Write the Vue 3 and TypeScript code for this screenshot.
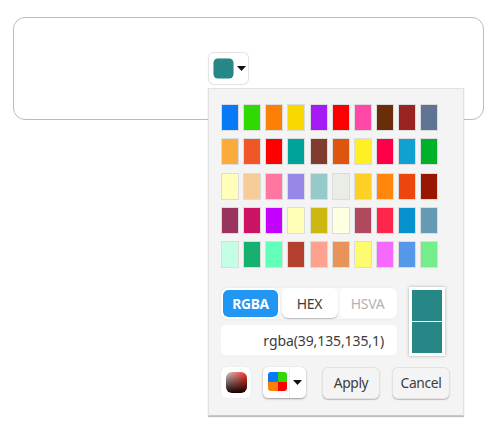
<script setup lang="ts">
import { ref } from 'vue'

const palette: string[][] = [
  ['#0879f7', '#30d903', '#fc8007', '#f8d800', '#a51af5', '#fc0000', '#ff48a8', '#692e09', '#9a2323', '#5f7593'],
  ['#fbab3c', '#f05727', '#ff0000', '#00a39a', '#803c2e', '#dd550f', '#fff026', '#ff0048', '#12a0d0', '#00b22a'],
  ['#ffffba', '#f6cd98', '#ff76a0', '#9885e8', '#96caca', '#eaede5', '#ffd024', '#ff870c', '#ed450e', '#991700'],
  ['#99345f', '#cc1263', '#c400ff', '#ffffb8', '#cdb812', '#ffffe2', '#b1495e', '#ff264b', '#0792cd', '#649bb3'],
  ['#c4ffe5', '#17b16f', '#62ffba', '#b3412e', '#ffa18f', '#e8935a', '#fffb6e', '#f768ff', '#5598e9', '#73ee88'],
]
const modes = ['RGBA', 'HEX', 'HSVA']
const mode = ref('RGBA')
const value = 'rgba(39,135,135,1)'
</script>

<template>
  <main class="page">
    <section class="field">
      <button class="trigger">
        <span class="trigger-color"></span>
        <svg class="caret" viewBox="0 0 9 5"><path d="M0 0h9L4.5 5z" /></svg>
      </button>
      <div class="popup">
        <div class="palette">
          <div v-for="(row, r) in palette" :key="r" class="palette-row">
            <span v-for="(c, i) in row" :key="i" class="tile" :style="{ backgroundColor: c }"></span>
          </div>
        </div>
        <div class="value-area">
          <div class="inputs">
            <div class="modes">
              <button
                v-for="m in modes"
                :key="m"
                class="mode"
                :class="{ active: m === mode, disabled: m === 'HSVA' }"
                @click="mode = m"
              >{{ m }}</button>
            </div>
            <div class="value">{{ value }}</div>
          </div>
          <div class="preview"><span></span><span></span></div>
        </div>
        <div class="actions">
          <button class="gradient-btn"><span class="gradient"></span></button>
          <button class="split">
            <span class="split-main"><span class="quad"><i></i><i></i><i></i><i></i></span></span>
            <span class="split-arrow"><svg class="caret" viewBox="0 0 9 5"><path d="M0 0h9L4.5 5z" /></svg></span>
          </button>
          <button class="action apply">Apply</button>
          <button class="action">Cancel</button>
        </div>
      </div>
    </section>
  </main>
</template>

<style>
body {
  background: #fff;
}
</style>

<style scoped>
* {
  box-sizing: border-box;
}
.page {
  height: 445px;
  padding: 17px 16px 0 13px;
  overflow: hidden;
  font-family: "Noto Sans", "Open Sans", sans-serif;
  font-size: 14px;
  color: #3c3c3c;
}
button {
  margin: 0;
  padding: 0;
  border: 0;
  font: inherit;
  color: inherit;
  background: #fff;
}
.field {
  position: relative;
  height: 103px;
  padding: 35px 0 0 195px;
  border: 1px solid #bcbcbc;
  border-radius: 12px;
}
.trigger {
  display: flex;
  align-items: center;
  gap: 4px;
  width: 39px;
  height: 31px;
  padding: 0 0 1px 5px;
  border-radius: 5px;
  box-shadow: 0 0 1px 1px #e2e2e2;
}
.trigger-color {
  width: 19px;
  height: 19px;
  border-radius: 4px;
  background: #278787;
  box-shadow: 0 0 0 0.5px #1f7b7b;
}
.caret {
  display: block;
  width: 9px;
  height: 5px;
  fill: #111;
}
.popup {
  position: absolute;
  left: 194px;
  top: 70px;
  width: 256px;
  height: 328px;
  padding: 15px 0 0 12px;
  background: #f4f4f4;
  border: 1px solid #e1e1e1;
  border-bottom: 1px solid #c8c8c8;
  box-shadow: 0 1px 1px #bdbdbd;
}
.palette {
  display: flex;
  flex-direction: column;
  gap: 7.25px;
}
.palette-row {
  display: flex;
  gap: 4.15px;
}
.tile {
  width: 18px;
  height: 27px;
  border: 1px solid #dcdcdc;
  background-clip: padding-box;
}
.value-area {
  display: flex;
  gap: 12px;
  margin-top: 19px;
}
.inputs {
  width: 176px;
  padding-top: 1px;
}
.modes {
  display: flex;
  gap: 2px;
  height: 31px;
  border-radius: 6px;
  background: #f8f8f8;
  box-shadow: 0 0 2px #e3e3e3;
}
.mode {
  width: 56px;
  height: 30px;
  padding-right: 1px;
  border-radius: 6px;
  letter-spacing: -0.3px;
  line-height: 31px;
  box-shadow: 0 1px 1px #bbb;
}
.mode.active {
  width: 59px;
  height: 31px;
  padding: 0;
  border: 2px solid #fff;
  border-radius: 7px;
  background: #2196f3;
  background-clip: padding-box;
  line-height: 28px;
  color: #fff;
  font-weight: 700;
  font-size: 13.8px;
  box-shadow: 0 0 2px #e3e3e3;
}
.mode.disabled {
  width: 57px;
  padding-right: 2px;
  color: #b3b3b3;
  box-shadow: none;
}
.value {
  height: 30px;
  margin-top: 6px;
  padding-right: 13px;
  border-radius: 5px;
  background: #fff;
  text-align: right;
  letter-spacing: -0.1px;
  line-height: 31px;
}
.preview {
  display: flex;
  flex-direction: column;
  gap: 1px;
  width: 36px;
  height: 69px;
  padding: 3px;
  background: #fff;
  box-shadow: 0 0 3px #aaa;
}
.preview span {
  flex: 1;
  background: #278787;
}
.actions {
  display: flex;
  margin-top: 11px;
}
.gradient-btn {
  display: flex;
  align-items: center;
  justify-content: center;
  width: 30px;
  height: 31px;
  margin-right: 12px;
  border-radius: 6px;
  box-shadow: 0 0 2px #ddd;
}
.gradient {
  width: 21px;
  height: 21px;
  margin-top: -1px;
  border-radius: 6px;
  background: linear-gradient(to bottom, transparent, #160000), linear-gradient(to right, #ccc, #ff3328);
}
.split {
  display: flex;
  width: 43px;
  height: 31px;
  border-radius: 5px;
  box-shadow: 0 0 1px #ccc, 0 1px 2px #999;
}
.split-main {
  display: flex;
  align-items: center;
  width: 27px;
  padding: 0 0 2px 5px;
  border-right: 1px solid #eee;
}
.quad {
  display: grid;
  grid-template-columns: 1fr 1fr;
  width: 19px;
  height: 19px;
  border-radius: 3px;
  overflow: hidden;
}
.quad i:nth-child(1) {
  background: #0879f7;
}
.quad i:nth-child(2) {
  background: #30d903;
}
.quad i:nth-child(3) {
  background: #fc8007;
}
.quad i:nth-child(4) {
  background: #fc0000;
}
.split-arrow {
  display: flex;
  align-items: center;
  padding-left: 3px;
}
.action {
  width: 58px;
  height: 32px;
  border: 1px solid #e2e2e2;
  border-radius: 6px;
  background: #f4f4f4;
  font-size: 13.8px;
  letter-spacing: -0.35px;
  line-height: 30px;
  box-shadow: 0 1px 1px #bbb;
}
.apply {
  margin: 0 12px 0 16px;
}
</style>
